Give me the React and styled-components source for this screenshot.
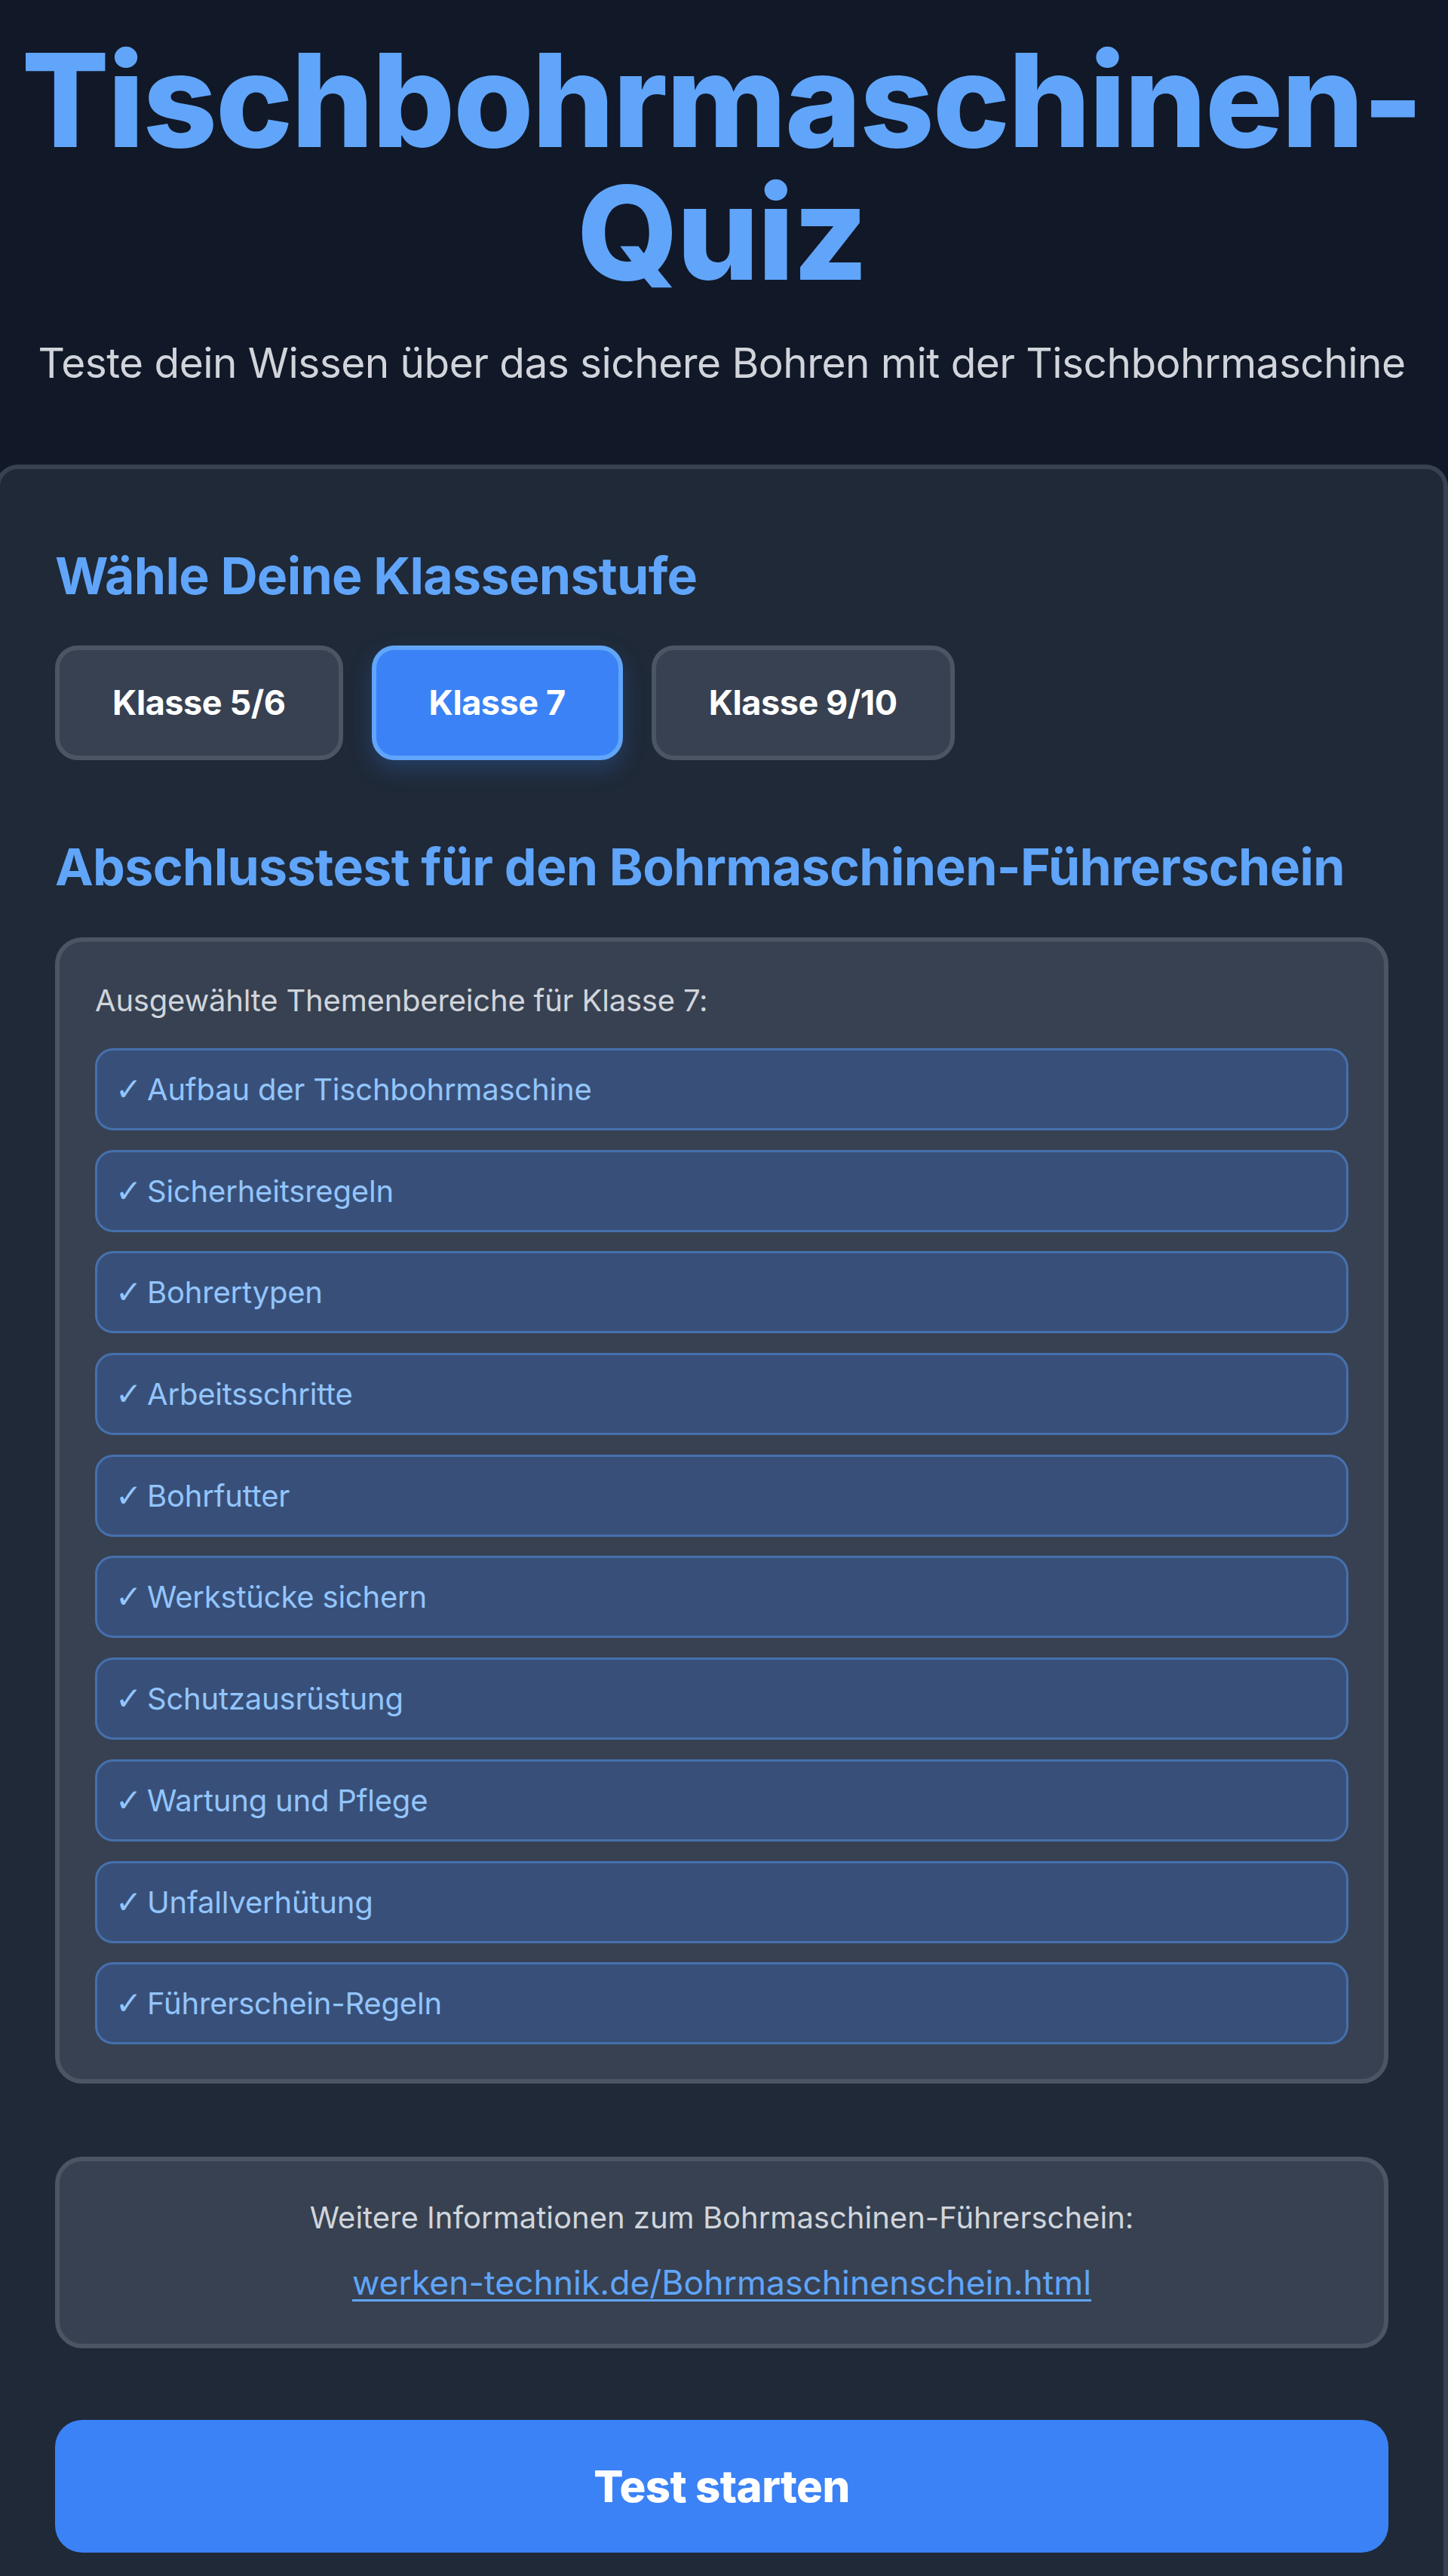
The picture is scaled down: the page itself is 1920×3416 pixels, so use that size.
import React, { useState } from "react";
import styled, { createGlobalStyle } from "styled-components";

const GlobalStyle = createGlobalStyle`
  * {
    box-sizing: border-box;
  }

  html,
  body {
    margin: 0;
    padding: 0;
    background: #111827;
    overflow-x: hidden;
  }

  body {
    font-family: Inter, "Noto Sans", "Liberation Sans", sans-serif;
    color: #f3f4f6;
  }
`;

const grades = ["Klasse 5/6", "Klasse 7", "Klasse 9/10"];

const topics = [
  "Aufbau der Tischbohrmaschine",
  "Sicherheitsregeln",
  "Bohrertypen",
  "Arbeitsschritte",
  "Bohrfutter",
  "Werkstücke sichern",
  "Schutzausrüstung",
  "Wartung und Pflege",
  "Unfallverhütung",
  "Führerschein-Regeln",
];

// Styled Components
const Page = styled.div`
  width: calc(100% - 6px);
  min-height: 3416px;
  padding-top: 44px;
  background: #111827;
`;

const Header = styled.header`
  text-align: center;
  margin-bottom: 93px;
`;

const Title = styled.h1`
  margin: 0;
  font-size: 172px;
  line-height: 176px;
  font-weight: 800;
  letter-spacing: -0.012em;
  color: #60a5fa;
`;

const Subtitle = styled.p`
  margin: 43px 0 0;
  font-size: 55px;
  line-height: 84px;
  letter-spacing: -0.01em;
  color: #d1d5db;
`;

const Card = styled.main`
  margin: 0 -6px;
  padding: 93px 73px 72px;
  background: #1f2937;
  border: 6px solid #374151;
  border-radius: 30px;
`;

const SectionTitle = styled.h2`
  margin: 0 0 ${(p) => p.$gap}px;
  font-size: 68px;
  line-height: 96px;
  font-weight: 700;
  letter-spacing: -0.01em;
  color: #60a5fa;
`;

const GradeRow = styled.div`
  display: flex;
  gap: 38px;
  margin-bottom: 93px;
`;

const GradeButton = styled.button`
  padding: 34px 70px;
  font-family: inherit;
  font-size: 45px;
  line-height: 72px;
  font-weight: 700;
  letter-spacing: -0.01em;
  color: #fff;
  background: ${(p) => (p.$active ? "#3b82f6" : "#374151")};
  border: 6px solid ${(p) => (p.$active ? "#60a5fa" : "#4b5563")};
  border-radius: 30px;
  box-shadow: ${(p) =>
    p.$active ? "0 12px 30px rgba(59, 130, 246, 0.25)" : "none"};
  cursor: pointer;
`;

const TopicsBox = styled.section`
  padding: 48px 47px 46px;
  background: #374151;
  border: 6px solid #4b5563;
  border-radius: 36px;
`;

const TopicsLabel = styled.p`
  margin: 0 0 33px;
  font-size: 40px;
  line-height: 60px;
  letter-spacing: -0.005em;
  color: #d1d5db;
`;

const TopicList = styled.ul`
  display: flex;
  flex-direction: column;
  gap: 25.7px;
  margin: 0;
  padding: 0;
  list-style: none;
`;

const TopicItem = styled.li`
  height: 109px;
  padding: 20px 24px;
  font-size: 40px;
  line-height: 63px;
  letter-spacing: -0.005em;
  color: #93c5fd;
  background: #385079;
  border: 3px solid #4670ad;
  border-radius: 24px;
`;

const Check = styled.span`
  font-family: "DejaVu Sans", sans-serif;
  font-size: 42px;
  line-height: 1;
  margin-right: 7px;
`;

const InfoBox = styled.div`
  margin-top: 97px;
  padding: 45px;
  text-align: center;
  background: #374151;
  border: 6px solid #4b5563;
  border-radius: 36px;
`;

const InfoText = styled.p`
  margin: 0 0 20px;
  font-size: 40px;
  line-height: 60px;
  color: #d1d5db;
`;

const InfoLink = styled.a`
  font-size: 44.5px;
  line-height: 72px;
  color: #60a5fa;
  text-decoration: underline;
  text-underline-offset: 6px;
  text-decoration-thickness: 3px;
`;

const StartButton = styled.button`
  display: block;
  width: 100%;
  margin-top: 95px;
  padding: 46px;
  font-family: inherit;
  font-size: 58px;
  line-height: 84px;
  font-weight: 800;
  letter-spacing: -0.01em;
  color: #fff;
  background: #3b82f6;
  border: none;
  border-radius: 36px;
  cursor: pointer;
`;

const App = () => {
  const [grade, setGrade] = useState("Klasse 7");

  return (
    <>
      <GlobalStyle />
      <Page>
        <Header>
          <Title>
            Tischbohrmaschinen-
            <br />
            Quiz
          </Title>
          <Subtitle>
            Teste dein Wissen über das sichere Bohren mit der Tischbohrmaschine
          </Subtitle>
        </Header>

        <Card>
          <SectionTitle $gap={45}>Wähle Deine Klassenstufe</SectionTitle>
          <GradeRow>
            {grades.map((g) => (
              <GradeButton
                key={g}
                $active={g === grade}
                onClick={() => setGrade(g)}
              >
                {g}
              </GradeButton>
            ))}
          </GradeRow>

          <SectionTitle $gap={46}>
            Abschlusstest für den Bohrmaschinen-Führerschein
          </SectionTitle>
          <TopicsBox>
            <TopicsLabel>Ausgewählte Themenbereiche für Klasse 7:</TopicsLabel>
            <TopicList>
              {topics.map((t) => (
                <TopicItem key={t}>
                  <Check>✓</Check>
                  {t}
                </TopicItem>
              ))}
            </TopicList>
          </TopicsBox>

          <InfoBox>
            <InfoText>
              Weitere Informationen zum Bohrmaschinen-Führerschein:
            </InfoText>
            <InfoLink href="#">
              werken-technik.de/Bohrmaschinenschein.html
            </InfoLink>
          </InfoBox>

          <StartButton>Test starten</StartButton>
        </Card>
      </Page>
    </>
  );
};

export default App;
